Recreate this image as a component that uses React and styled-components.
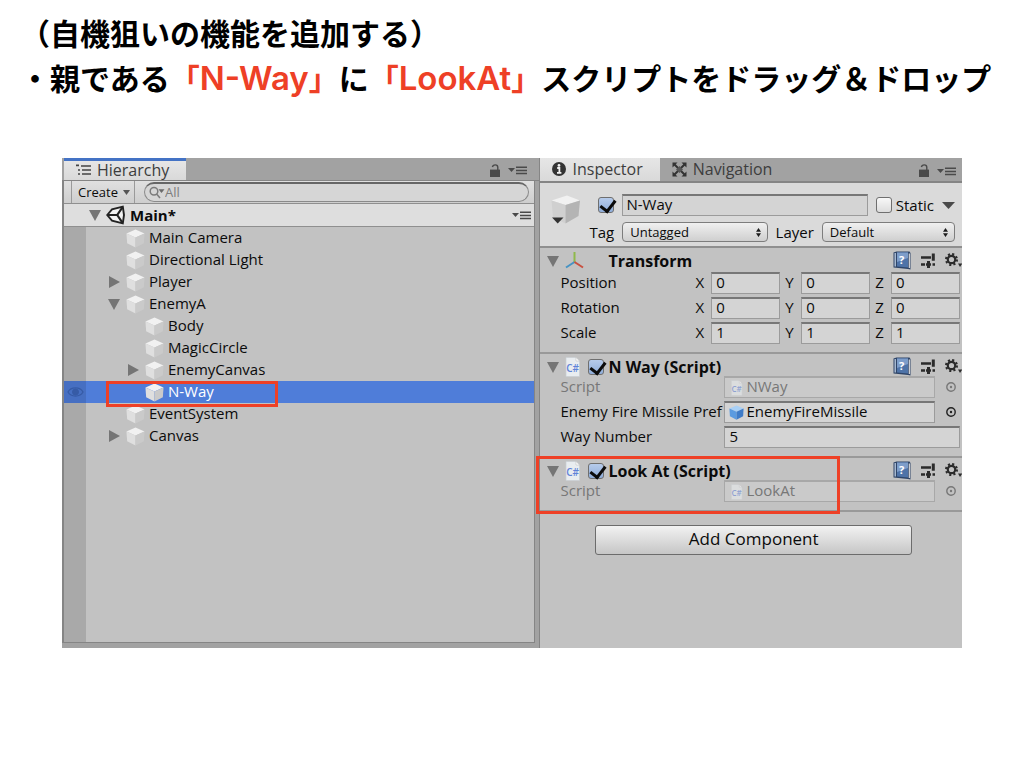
import React, { useState } from "react";
import styled, { createGlobalStyle, css } from "styled-components";

const GlobalStyle = createGlobalStyle`
  * {
    box-sizing: border-box;
  }
  body {
    margin: 0;
    background-color: #fff;
    color: #0b0b0b;
    font-family: "Open Sans", "Noto Sans", sans-serif;
    font-size: 15px;
  }
  button, input, select {
    font: inherit;
    color: inherit;
    margin: 0;
  }
`;

/* ---------- icons ---------- */

const CubeIcon = ({ size = 19, blue }) => (
  <svg width={size} height={size} viewBox="0 0 20 20">
    <path d="M10 0.5 19.5 4.8 10 9 0.5 4.8z" fill={blue ? "#a9d0f5" : "#f1f1f1"} />
    <path d="M0.5 4.8 10 9V19.5L1.2 15z" fill={blue ? "#5b9be0" : "#dfdfdf"} />
    <path d="M19.5 4.8 10 9V19.5L18.8 15z" fill={blue ? "#3f7cc8" : "#cacaca"} />
  </svg>
);

const Arrow = ({ open }) => (
  <svg width="12" height="12" viewBox="0 0 12 12">
    <path d={open ? "M0 1H12L6 12z" : "M1 0V12L12 6z"} fill="#757575" />
  </svg>
);

const ListIcon = () => (
  <svg width="15" height="12" viewBox="0 0 15 12" stroke="#444" strokeWidth="1.7">
    <path d="M5 2H15M6 6H15M6 10H15M0 1.4H3M2 6H4M2 10H4" />
  </svg>
);

const LockIcon = () => (
  <svg width="12" height="13" viewBox="0 0 12 13">
    <rect x="1" y="5.6" width="10" height="7.4" fill="#4a4a4a" />
    <path d="M3.4 3C4 0.2 8.8 0 8.8 3.4V6" fill="none" stroke="#4a4a4a" strokeWidth="1.4" />
  </svg>
);

const MenuIcon = () => (
  <svg width="20" height="10" viewBox="0 0 20 10">
    <path d="M0 3H7L3.5 7z" fill="#4a4a4a" />
    <path d="M8 2.2H19M8 5.4H19M8 8.6H19" stroke="#4a4a4a" strokeWidth="1.5" />
  </svg>
);

const UnityIcon = () => (
  <svg width="19" height="20" viewBox="0 0 19 20">
    <path
      d="M1.2 10 6 4.4 16.8 1.6 18 10 16.8 18.4 6 15.6z"
      fill="#f2f2f2"
      stroke="#222"
      strokeWidth="1.9"
    />
    <path
      d="M2 10H11.2M11.2 10 16.4 2.4M11.2 10 16.4 17.6"
      fill="none"
      stroke="#222"
      strokeWidth="2.2"
    />
  </svg>
);

const SearchIcon = () => (
  <svg width="16" height="13" viewBox="0 0 16 13" fill="none" stroke="#7b7b7b" strokeWidth="1.5">
    <circle cx="5" cy="5.2" r="3.8" />
    <path d="M7.6 8 11 12" />
    <path d="M9.5 3.2H15.5L12.5 7z" fill="#6b6b6b" stroke="none" />
  </svg>
);

const EyeIcon = () => (
  <svg width="17" height="12" viewBox="0 0 17 12" fill="none" stroke="#365ba6">
    <path d="M1 6C4 0.6 13 0.6 16 6 13 11.4 4 11.4 1 6z" strokeWidth="1.3" />
    <circle cx="8.5" cy="6" r="3" fill="#365ba6" />
  </svg>
);

const InfoIcon = () => (
  <svg width="14" height="14" viewBox="0 0 14 14">
    <circle cx="7" cy="7" r="7" fill="#333" />
    <path d="M5.2 6H7.4V10.4M5 10.8H9.4" fill="none" stroke="#f2f2f2" strokeWidth="1.8" />
    <circle cx="7" cy="3.4" r="1.4" fill="#f2f2f2" />
  </svg>
);

const NavIcon = () => (
  <svg width="15" height="15" viewBox="0 0 15 15">
    <path d="M2 2 13 13M13 2 2 13" stroke="#333" strokeWidth="2" />
    <path
      d="M0.5 0.5H5.5L0.5 5.5zM14.5 0.5V5.5L9.5 0.5zM0.5 14.5V9.5L5.5 14.5zM14.5 14.5H9.5L14.5 9.5z"
      fill="#333"
    />
    <path d="M7.5 4 11 7.5 7.5 11 4 7.5z" fill="#555" />
  </svg>
);

const BigCubeIcon = () => (
  <svg width="30" height="31" viewBox="0 0 30 31">
    <path d="M16 1.5 29 6.5 14.5 11 0.5 6.5z" fill="#f1f1f1" />
    <path d="M0.5 6.5 14.5 11V29.5L2 23.5z" fill="#d0d0d0" />
    <path d="M29 6.5 14.5 11V29.5L27.5 22z" fill="#b4b4b4" />
    <path d="M1 23.5H12.5L6.7 29.5z" fill="#333" />
  </svg>
);

const AxisIcon = () => (
  <svg width="19" height="17" viewBox="0 0 19 17" fill="none" strokeWidth="2">
    <path d="M9.5 0V10" stroke="#8fb94b" />
    <path d="M9.5 10 1 15.5" stroke="#4593c4" />
    <path d="M9.5 10 18 15.5" stroke="#c9503f" />
  </svg>
);

const ScriptIcon = ({ small }) => (
  <svg width="15" height={small ? 16 : 20} viewBox="0 0 15 20" opacity={small ? 0.55 : 1}>
    <path d="M1 0.5H11L14.5 4V19.5H1z" fill="#e9edf0" stroke="#c9cfd3" strokeWidth="0.7" />
    <path d="M11 0.5V4H14.5z" fill="#fff" stroke="#b9b9b9" strokeWidth="0.5" />
    <text x="1.2" y="15" fontSize="10" fontWeight="600" fill="#5f83d8">
      C#
    </text>
  </svg>
);

const BookIcon = () => (
  <svg width="18" height="19" viewBox="0 0 18 19">
    <path d="M0.5 1.5 3.5 0.5H16.5L17.5 2V18.5L15 18 0.5 16.5z" fill="#2f4568" />
    <path d="M4 1.6H15V16.6L4 15.4z" fill="#4e73a8" />
    <path d="M4 1.6H15V7L4 11z" fill="#7d9dca" />
    <path d="M2.2 2V15.6" stroke="#c6d6ea" strokeWidth="1.2" />
    <path d="M16.3 2.5V17" stroke="#e8e8e8" strokeWidth="1.1" />
    <text x="6" y="13" fontSize="11" fontWeight="700" fill="#fff">
      ?
    </text>
  </svg>
);

const SliderIcon = () => (
  <svg width="14" height="16" viewBox="0 0 14 16" stroke="#2b2b2b" fill="none">
    <path d="M0 4.5H10M0 11.5H4M5 11.5H10M11.5 11.5H14" strokeWidth="2.4" />
    <path d="M12.3 0.5V7.8M7.5 8V15" strokeWidth="3" />
  </svg>
);

const GearIcon = () => (
  <svg width="17" height="15" viewBox="0 0 17 15">
    <circle cx="6.5" cy="6.5" r="3.7" fill="none" stroke="#2b2b2b" strokeWidth="2.2" />
    <circle
      cx="6.5"
      cy="6.5"
      r="5.4"
      fill="none"
      stroke="#2b2b2b"
      strokeWidth="2.2"
      strokeDasharray="2.1 2.14"
    />
    <path d="M13 10.5H17V11L15 14z" fill="#2b2b2b" />
  </svg>
);

const TargetIcon = () => (
  <svg width="10" height="10" viewBox="0 0 10 10">
    <circle cx="5" cy="5" r="4.2" fill="none" stroke="currentColor" strokeWidth="1.4" />
    <circle cx="5" cy="5" r="1.2" fill="currentColor" />
  </svg>
);

const UpDownIcon = () => (
  <svg width="5" height="9" viewBox="0 0 5 9">
    <path d="M0 3.8 2.5 0 5 3.8zM0 5.2H5L2.5 9z" fill="#1c1c1c" />
  </svg>
);

/* ---------- data ---------- */

const treeItems = [
  { name: "Main Camera", depth: 0 },
  { name: "Directional Light", depth: 0 },
  { name: "Player", depth: 0, arrow: "closed" },
  { name: "EnemyA", depth: 0, arrow: "open" },
  { name: "Body", depth: 1 },
  { name: "MagicCircle", depth: 1 },
  { name: "EnemyCanvas", depth: 1, arrow: "closed" },
  { name: "N-Way", depth: 1, marked: true },
  { name: "EventSystem", depth: 0 },
  { name: "Canvas", depth: 0, arrow: "closed" },
];

const transformRows = [
  { label: "Position", value: "0" },
  { label: "Rotation", value: "0" },
  { label: "Scale", value: "1" },
];

/* ---------- components ---------- */

const ComponentTools = () => (
  <Tools>
    <IconButton aria-label="Help"><BookIcon /></IconButton>
    <IconButton aria-label="Presets"><SliderIcon /></IconButton>
    <IconButton aria-label="Settings"><GearIcon /></IconButton>
  </Tools>
);

const Hierarchy = () => {
  const [selected, setSelected] = useState("N-Way");

  return (
    <HierarchyPanel>
      <TabBar>
        <Tab $focused>
          <ListIcon />
          Hierarchy
        </Tab>
        <TabTools>
          <LockIcon />
          <MenuIcon />
        </TabTools>
      </TabBar>
      <HierarchyBody>
        <Toolbar>
          <CreateButton>
            Create
            <svg width="7" height="5" viewBox="0 0 7 5">
              <path d="M0 0H7L3.5 5z" fill="#555" />
            </svg>
          </CreateButton>
          <SearchBox>
            <SearchIcon />
            <SearchInput type="text" placeholder="All" aria-label="Search" />
          </SearchBox>
        </Toolbar>
        <SceneRow>
          <Arrow open />
          <UnityIcon />
          <SceneName>Main*</SceneName>
          <MenuIcon />
        </SceneRow>
        <Tree>
          {treeItems.map((item) => (
            <TreeRow
              key={item.name}
              $selected={selected === item.name}
              onClick={() => setSelected(item.name)}
            >
              <Gutter $selected={selected === item.name}>
                {selected === item.name && <EyeIcon />}
              </Gutter>
              <TreeLabel $depth={item.depth}>
                <ArrowSlot>
                  {item.arrow && <Arrow open={item.arrow === "open"} />}
                </ArrowSlot>
                <CubeIcon />
                <TreeText>{item.name}</TreeText>
              </TreeLabel>
              {item.marked && <RowMarker />}
            </TreeRow>
          ))}
          <GutterFill />
        </Tree>
      </HierarchyBody>
    </HierarchyPanel>
  );
};

const ScriptRow = ({ id, name }) => (
  <FieldRow>
    <FieldLabel htmlFor={id} $disabled>Script</FieldLabel>
    <ObjectField $disabled>
      <ScriptIcon small />
      <ObjectInput id={id} defaultValue={name} disabled />
    </ObjectField>
    <PickButton aria-label="Select script" disabled>
      <TargetIcon />
    </PickButton>
  </FieldRow>
);

const Inspector = () => (
  <InspectorPanel>
    <TabBar $tall>
      <Tab>
        <InfoIcon />
        Inspector
      </Tab>
      <Tab $inactive>
        <NavIcon />
        Navigation
      </Tab>
      <TabTools $right>
        <LockIcon />
        <MenuIcon />
      </TabTools>
    </TabBar>

    <ObjectHeader>
      <BigCubeIcon />
      <HeaderLines>
        <HeaderLine $name>
          <Checkbox type="checkbox" defaultChecked aria-label="Active" />
          <NameInput type="text" defaultValue="N-Way" aria-label="Name" />
          <StaticLabel>
            <Checkbox type="checkbox" />
            Static
          </StaticLabel>
          <svg width="13" height="7" viewBox="0 0 13 7">
            <path d="M0 0H13L6.5 7z" fill="#4a4a4a" />
          </svg>
        </HeaderLine>
        <HeaderLine>
          <label htmlFor="tag">Tag</label>
          <SelectWrap $grow={146}>
            <Select id="tag">
              <option>Untagged</option>
            </Select>
            <UpDownIcon />
          </SelectWrap>
          <label htmlFor="layer">Layer</label>
          <SelectWrap $grow={133}>
            <Select id="layer">
              <option>Default</option>
            </Select>
            <UpDownIcon />
          </SelectWrap>
        </HeaderLine>
      </HeaderLines>
    </ObjectHeader>

    <Section>
      <SectionTitle>
        <Arrow open />
        <AxisIcon />
        <TitleText $indent>Transform</TitleText>
        <ComponentTools />
      </SectionTitle>
      <Fields $spaced>
        {transformRows.map((row) => (
          <FieldRow key={row.label}>
            <VectorLabel>{row.label}</VectorLabel>
            {["X", "Y", "Z"].map((axis) => (
              <AxisLabel key={axis}>
                <AxisName>{axis}</AxisName>
                <TextField type="text" defaultValue={row.value} />
              </AxisLabel>
            ))}
          </FieldRow>
        ))}
      </Fields>
    </Section>

    <Section>
      <SectionTitle>
        <Arrow open />
        <ScriptIcon />
        <TitleCheckbox type="checkbox" defaultChecked aria-label="N Way enabled" />
        <TitleText>N Way (Script)</TitleText>
        <ComponentTools />
      </SectionTitle>
      <Fields>
        <ScriptRow id="nway-script" name="NWay" />
        <FieldRow>
          <FieldLabel htmlFor="prefab">Enemy Fire Missile Pref</FieldLabel>
          <ObjectField>
            <CubeIcon size={15} blue />
            <ObjectInput id="prefab" defaultValue="EnemyFireMissile" />
          </ObjectField>
          <PickButton aria-label="Select prefab">
            <TargetIcon />
          </PickButton>
        </FieldRow>
        <FieldRow>
          <FieldLabel htmlFor="way-number">Way Number</FieldLabel>
          <TextField id="way-number" type="text" defaultValue="5" />
        </FieldRow>
      </Fields>
    </Section>

    <Section>
      <SectionTitle>
        <Arrow open />
        <ScriptIcon />
        <TitleCheckbox type="checkbox" defaultChecked aria-label="Look At enabled" />
        <TitleText>Look At (Script)</TitleText>
        <ComponentTools />
      </SectionTitle>
      <Fields>
        <ScriptRow id="lookat-script" name="LookAt" />
      </Fields>
      <SectionMarker />
    </Section>

    <InspectorFooter>
      <AddButton>Add Component</AddButton>
    </InspectorFooter>
  </InspectorPanel>
);

const App = () => (
  <>
    <GlobalStyle />
    <Slide>
      <Heading>
        （自機狙いの機能を追加する）
        <br />
        ・親である
        <Accent>
          「<Latin>N-Way</Latin>」
        </Accent>
        に
        <Accent>
          「<Latin>LookAt</Latin>」
        </Accent>
        スクリプトをドラッグ＆ドロップ
      </Heading>
      <Editor>
        <Hierarchy />
        <Inspector />
      </Editor>
    </Slide>
  </>
);

/* ---------- slide ---------- */

const Slide = styled.main`
  padding: 10px 0 40px;
`;

const Heading = styled.h1`
  margin: 0 0 58px;
  padding-left: 20px;
  color: #000;
  font-family: "Noto Sans CJK JP", sans-serif;
  font-size: 30px;
  font-weight: 700;
  line-height: 45px;
  white-space: nowrap;
`;

const Accent = styled.span`
  color: #ee4026;
`;

const Latin = styled.span`
  font-family: "Inter", sans-serif;
  font-size: 33px;
  font-weight: 600;
  line-height: 1;
`;

const Editor = styled.div`
  display: flex;
  min-height: 490px;
  margin: 0 62px;
  background-color: #c2c2c2;
`;

/* ---------- shared ---------- */

const TabBar = styled.div`
  display: flex;
  align-items: stretch;
  height: ${({ $tall }) => ($tall ? 25 : 23)}px;
  border-bottom: ${({ $tall }) => ($tall ? 2 : 1)}px solid #858585;
  background-color: #a2a2a2;
`;

const Tab = styled.div`
  display: flex;
  align-items: center;
  gap: 6px;
  padding: 0 17px 1px 12px;
  color: #3d3d3d;
  background: linear-gradient(#e6e6e6, #d9d9d9);
  font-size: 16px;
  line-height: 18px;

  ${({ $focused }) =>
    $focused &&
    css`
      margin-left: 2px;
      border-top: 3px solid #4473c5;
    `}
  ${({ $inactive }) =>
    $inactive &&
    css`
      background: none;
    `}
`;

const TabTools = styled.div`
  display: flex;
  align-items: center;
  gap: 7px;
  margin-left: auto;
  padding: 2px ${({ $right }) => ($right ? 5 : 11)}px 0 0;
`;

const IconButton = styled.button`
  display: flex;
  padding: 0;
  border: 0;
  background: none;
`;

const Checkbox = styled.input`
  appearance: none;
  flex: none;
  width: 16px;
  height: 16px;
  border: 1px solid #6f6f6f;
  border-radius: 3px;
  background: linear-gradient(#f8f8f8, #dcdcdc);

  &:checked {
    background: linear-gradient(#b6cbeb, #8fadd9);
  }
  &:checked::after {
    content: "";
    display: block;
    width: 7px;
    height: 12px;
    margin: -1px 0 0 4px;
    border: solid #0b0b0b;
    border-width: 0 3px 3px 0;
    transform: rotate(38deg);
  }
`;

const fieldBox = css`
  height: 22px;
  border: 1px solid #9b9b9b;
  border-top: 2px solid #777;
  background-color: #d4d4d4;
`;

/* ---------- hierarchy ---------- */

const HierarchyPanel = styled.section`
  display: flex;
  flex: 478 1 0;
  flex-direction: column;
  min-width: 0;
  padding-bottom: 5px;
  background-color: #a2a2a2;
`;

const HierarchyBody = styled.div`
  display: flex;
  flex: 1;
  flex-direction: column;
  margin-right: 4px;
  border: solid #858585;
  border-width: 0 1px 1px 2px;
  background-color: #c2c2c2;
`;

const Toolbar = styled.div`
  display: flex;
  align-items: center;
  height: 23px;
  padding: 0 5px 0 7px;
  border-bottom: 1px solid #8f8f8f;
  background: linear-gradient(#e0e0e0, #cecece);
`;

const CreateButton = styled.button`
  display: flex;
  align-items: center;
  gap: 5px;
  height: 22px;
  margin-right: 9px;
  padding: 0 4px 0 6px;
  border: solid #9a9a9a;
  border-width: 0 1px;
  background: none;
  font-size: 13px;
`;

const SearchBox = styled.label`
  display: flex;
  flex: 1;
  align-items: center;
  height: 20px;
  padding: 0 4px;
  border: 1px solid #8a8a8a;
  border-top: 2px solid #666;
  border-radius: 10px;
  background-color: #d6d6d6;
`;

const SearchInput = styled.input`
  flex: 1;
  min-width: 0;
  height: 16px;
  padding: 0 0 1px;
  border: 0;
  outline: none;
  background: none;
  font-size: 13px;

  &::placeholder {
    color: #7d7d7d;
    opacity: 1;
  }
`;

const SceneRow = styled.div`
  display: flex;
  align-items: center;
  gap: 5px;
  height: 23px;
  padding: 0 2px 0 25px;
  border-bottom: 1px solid #8f8f8f;
  background-color: #dedede;
`;

const SceneName = styled.span`
  flex: 1;
  padding-bottom: 1px;
  font-weight: 700;
`;

const Tree = styled.ul`
  display: flex;
  flex: 1;
  flex-direction: column;
  margin: 0;
  padding: 0;
  list-style: none;
`;

const TreeRow = styled.li`
  position: relative;
  display: flex;
  height: 22px;
  color: ${({ $selected }) => ($selected ? "#fff" : "inherit")};
  background-color: ${({ $selected }) => ($selected ? "#4f7dd9" : "transparent")};
`;

const Gutter = styled.div`
  display: flex;
  flex: none;
  align-items: center;
  justify-content: center;
  width: 22px;
  background-color: ${({ $selected }) => ($selected ? "#466fc2" : "#a9a9a9")};
`;

const GutterFill = styled.li`
  flex: 1;
  width: 22px;
  background-color: #a9a9a9;
`;

const TreeLabel = styled.div`
  display: flex;
  align-items: center;
  gap: 4px;
  padding-left: ${({ $depth }) => 22 + $depth * 19}px;
`;

const TreeText = styled.span`
  padding-bottom: 2px;
`;

const ArrowSlot = styled.span`
  display: flex;
  width: 14px;
`;

const RowMarker = styled.span`
  position: absolute;
  top: 0;
  left: 42px;
  width: 172px;
  height: 26px;
  z-index: 1;
  border: 3px solid #ee4026;
`;

/* ---------- inspector ---------- */

const InspectorPanel = styled.section`
  flex: 422 1 0;
  min-width: 0;
  border-left: 1px solid #858585;
`;

const ObjectHeader = styled.div`
  display: flex;
  gap: 4px;
  height: 65px;
  padding: 11px 7px 0 11px;
  border-bottom: 2px solid #8f8f8f;
  background-color: #dadada;
`;

const HeaderLines = styled.div`
  display: flex;
  flex: 1;
  flex-direction: column;
  gap: 5px;
  min-width: 0;
`;

const HeaderLine = styled.div`
  display: flex;
  align-items: center;
  gap: 8px;
  height: 22px;
  padding-left: ${({ $name }) => ($name ? 13 : 4)}px;
`;

const NameInput = styled.input`
  ${fieldBox}
  flex: 1;
  min-width: 0;
  padding: 0 3px 3px;
`;

const StaticLabel = styled.label`
  display: flex;
  align-items: center;
  gap: 4px;
`;

const SelectWrap = styled.div`
  display: flex;
  flex: ${({ $grow }) => $grow} 1 0;
  align-items: center;
  height: 20px;
  padding-right: 6px;
  border: 1px solid #7d7d7d;
  border-radius: 4px;
  background: linear-gradient(#f0f0f0, #cfcfcf);
`;

const Select = styled.select`
  appearance: none;
  flex: 1;
  min-width: 0;
  padding: 0 7px;
  border: 0;
  background: none;
  font-size: 13px;
`;

const Section = styled.section`
  position: relative;
  padding-bottom: 8px;
  border-bottom: 2px solid #999;
`;

const SectionTitle = styled.div`
  display: flex;
  align-items: center;
  gap: 6px;
  height: 22px;
  padding: 3px 0 0 7px;
`;

const TitleCheckbox = styled(Checkbox)`
  margin: 0 -2px 0 2px;
`;

const TitleText = styled.span`
  flex: 1;
  margin-left: ${({ $indent }) => ($indent ? 18 : 0)}px;
  font-size: 16px;
  font-weight: 700;
  line-height: 20px;
`;

const Tools = styled.div`
  display: flex;
  align-items: center;
  gap: 10px;
`;

const Fields = styled.div`
  display: flex;
  flex-direction: column;
  gap: 3px;
  padding-top: ${({ $spaced }) => ($spaced ? 2 : 0)}px;
`;

const FieldRow = styled.div`
  display: flex;
  align-items: center;
  height: 22px;
  padding: 0 2px 0 20px;
`;

const FieldLabel = styled.label`
  flex: none;
  width: 164px;
  padding-bottom: 2px;
  white-space: nowrap;
  color: ${({ $disabled }) => ($disabled ? "#777" : "inherit")};
`;

const VectorLabel = styled.span`
  flex: none;
  width: 130px;
  padding-bottom: 2px;
`;

const AxisLabel = styled.label`
  display: flex;
  flex: 1;
  align-items: center;
  justify-content: space-between;
  min-width: 0;
  padding-left: 5px;

  input {
    flex: none;
    width: 69px;
  }
`;

const AxisName = styled.span`
  padding-bottom: 2px;
`;

const TextField = styled.input`
  ${fieldBox}
  flex: 1;
  min-width: 0;
  padding: 0 4px 3px;
`;

const ObjectField = styled.div`
  ${fieldBox}
  display: flex;
  flex: 1;
  align-items: center;
  gap: 2px;
  min-width: 0;
  padding-left: 4px;
  ${({ $disabled }) =>
    $disabled &&
    css`
      border-color: #a8a8a8;
      background-color: #cacaca;
      color: #777;
    `}
`;

const ObjectInput = styled.input`
  flex: 1;
  min-width: 0;
  padding: 0 0 3px;
  border: 0;
  background: none;
`;

const PickButton = styled.button`
  display: flex;
  margin: 0 4px 0 11px;
  padding: 0;
  border: 0;
  background: none;
  color: #222;

  &:disabled {
    color: #777;
  }
`;

const SectionMarker = styled.span`
  position: absolute;
  top: -2px;
  left: -4px;
  width: 304px;
  height: 58px;
  border: 3px solid #ee4026;
`;

const InspectorFooter = styled.div`
  display: flex;
  justify-content: center;
  padding: 13px 50px 0 55px;
`;

const AddButton = styled.button`
  flex: 1;
  height: 30px;
  padding: 0 0 3px;
  border: 1px solid #6c6c6c;
  border-radius: 3px;
  background: linear-gradient(#f2f2f2, #c6c6c6);
  font-size: 17px;
`;

export default App;
